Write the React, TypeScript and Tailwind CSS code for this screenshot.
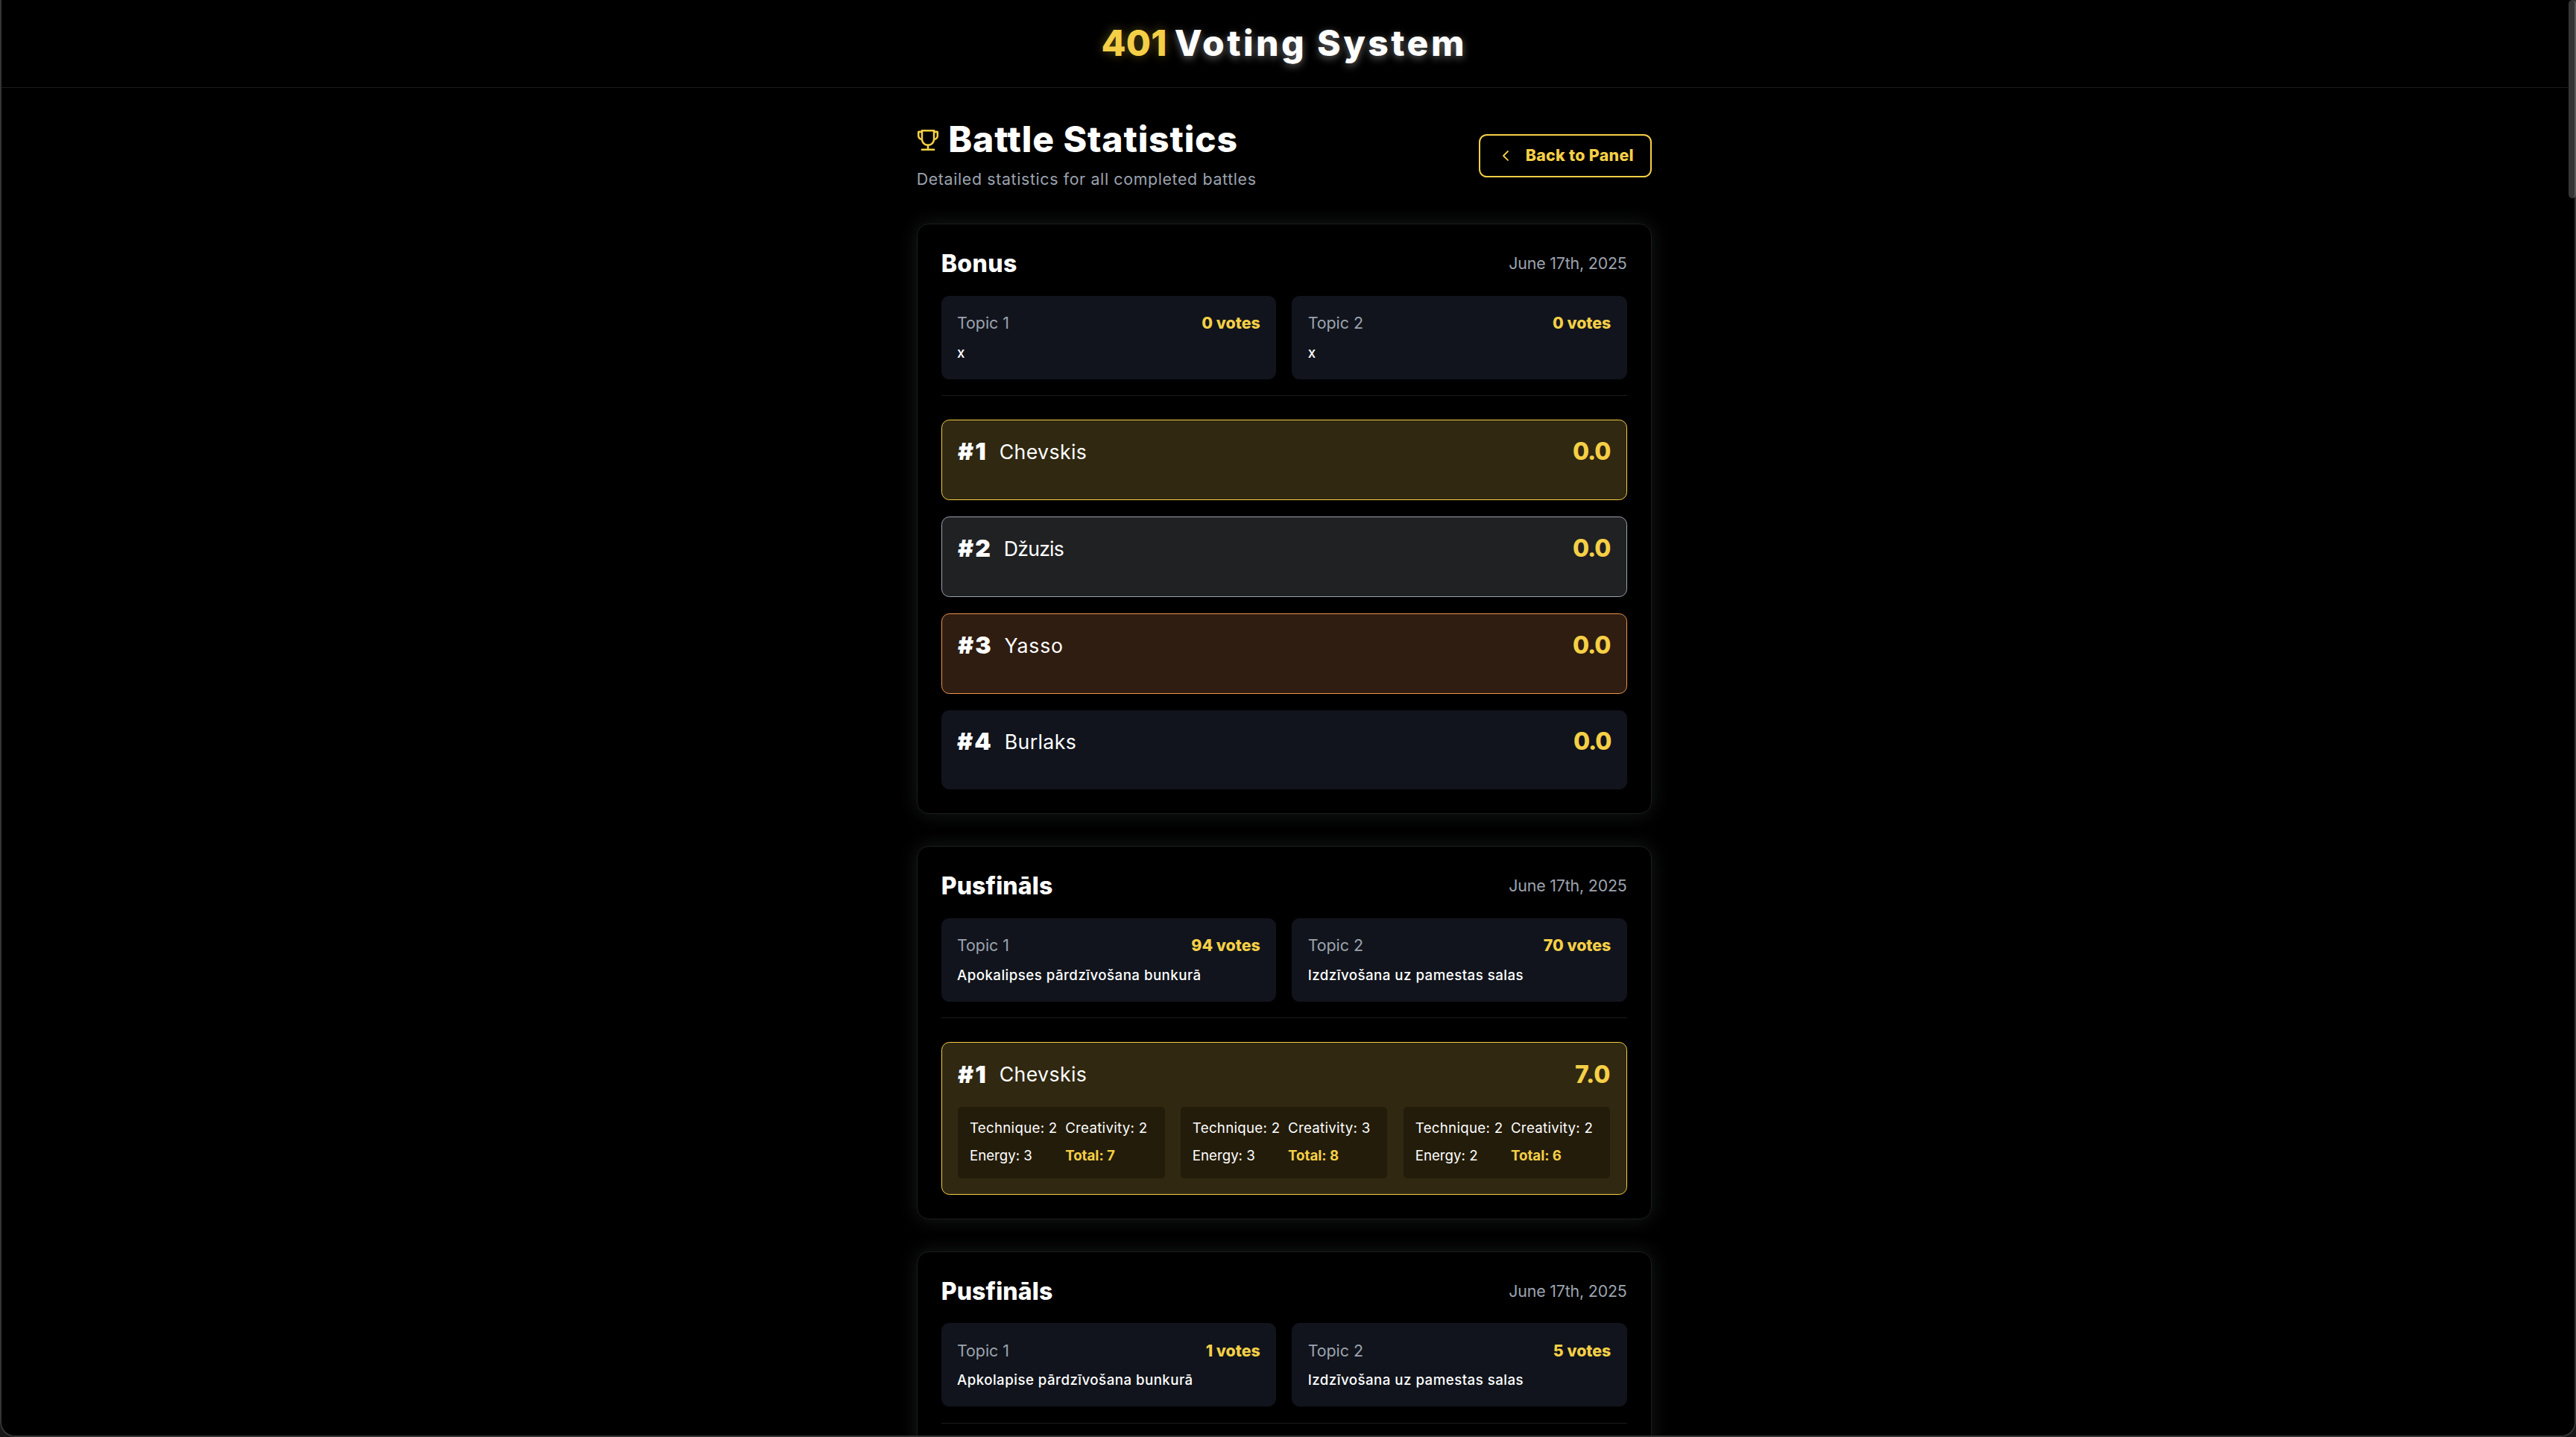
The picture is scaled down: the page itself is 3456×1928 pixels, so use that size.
import { AiOutlineTrophy } from "react-icons/ai";
import { ChevronLeft } from "lucide-react";
import clsx from "clsx";

interface Judge {
  technique: number;
  creativity: number;
  energy: number;
}

interface Result {
  name: string;
  nameClass: string;
  score: string;
  scoreClass: string;
  judges?: Judge[];
}

interface Topic {
  title: string;
  votes: number;
}

interface Battle {
  id: number;
  title: string;
  titleClass: string;
  date: string;
  topics: Topic[];
  results: Result[];
}

const BATTLES: Battle[] = [
  {
    id: 1,
    title: "Bonus",
    titleClass: "tracking-[0.3px]",
    date: "June 17th, 2025",
    topics: [
      { title: "x", votes: 0 },
      { title: "x", votes: 0 },
    ],
    results: [
      { name: "Chevskis", nameClass: "tracking-[0.3px]",  score: "0.0", scoreClass: "tracking-[-0.8px]" },
      { name: "Džuzis",   nameClass: "tracking-[-0.6px]", score: "0.0", scoreClass: "tracking-[-0.8px]" },
      { name: "Yasso",    nameClass: "tracking-[0.6px]",  score: "0.0", scoreClass: "tracking-[-0.8px]" },
      { name: "Burlaks",  nameClass: "tracking-[0.3px]",  score: "0.0", scoreClass: "tracking-[-0.8px]" },
    ],
  },
  {
    id: 2,
    title: "Pusfināls",
    titleClass: "tracking-[0.1px]",
    date: "June 17th, 2025",
    topics: [
      { title: "Apokalipses pārdzīvošana bunkurā", votes: 94 },
      { title: "Izdzīvošana uz pamestas salas",    votes: 70 },
    ],
    results: [
      {
        name: "Chevskis",
        nameClass: "tracking-[0.3px]",
        score: "7.0",
        scoreClass: "",
        judges: [
          { technique: 2, creativity: 2, energy: 3 },
          { technique: 2, creativity: 3, energy: 3 },
          { technique: 2, creativity: 2, energy: 2 },
        ],
      },
    ],
  },
  {
    id: 3,
    title: "Pusfināls",
    titleClass: "tracking-[0.1px]",
    date: "June 17th, 2025",
    topics: [
      { title: "Apkolapise pārdzīvošana bunkurā", votes: 1 },
      { title: "Izdzīvošana uz pamestas salas",   votes: 5 },
    ],
    results: [],
  },
];

const RANK_STYLES = [
  "bg-[#302811] border border-[#f5cf46]",
  "bg-[#202123] border border-[#9ca3af]",
  "bg-[#2f1d11] border border-[#ee9549]",
];

function JudgeScore({ judge }: { judge: Judge }) {
  const total = judge.technique + judge.creativity + judge.energy;
  return (
    <div className="grid grid-cols-[auto_1fr] gap-2 rounded bg-[#231c0a] p-3 text-sm whitespace-nowrap">
      <span className="tracking-[0.22px]">Technique: {judge.technique}</span>
      <span className="tracking-[0.22px]">Creativity: {judge.creativity}</span>
      <span>Energy: {judge.energy}</span>
      <span className="font-bold text-[#f5cf46]">Total: {total}</span>
    </div>
  );
}

function BattleCard({ battle }: { battle: Battle }) {
  return (
    <section className="rounded-xl border border-[#1b1d1e] bg-black p-6 shadow-[0_0_20px_rgba(200,230,220,0.11)]">
      <div className="mb-4 flex items-center justify-between">
        <h2 className={clsx("text-2xl font-extrabold", battle.titleClass)}>{battle.title}</h2>
        <span className="tracking-[-0.12px] text-[#9ca3af]">{battle.date}</span>
      </div>

      {/* Topics */}
      <div className="mb-4 grid grid-cols-2 gap-4">
        {battle.topics.map((topic, i) => (
          <div key={i} className="rounded-lg bg-[#11141c] p-4">
            <div className="mb-2 flex items-center justify-between">
              <span className="text-[#9ca3af]">Topic {i + 1}</span>
              <span className="font-extrabold text-[#f5cf46]">{topic.votes} votes</span>
            </div>
            <p className="text-sm font-medium tracking-[0.36px]">{topic.title}</p>
          </div>
        ))}
      </div>

      {/* Ranking */}
      <div className="space-y-4 border-t border-[#1b1b1c] pt-6">
        {battle.results.map((result, i) => (
          <div key={result.name} className={clsx("rounded-lg p-4", RANK_STYLES[i] ?? "bg-[#11141c]")}>
            <div className="mb-4 flex items-center justify-between">
              <div className="flex items-center gap-3">
                <span className="text-2xl font-black tracking-[1.5px]">#{i + 1}</span>
                <span className={clsx("text-xl", result.nameClass)}>{result.name}</span>
              </div>
              <span className={clsx("text-2xl font-extrabold text-[#f5cf46]", result.scoreClass)}>
                {result.score}
              </span>
            </div>
            {result.judges && (
              <div className="grid grid-cols-3 gap-4">
                {result.judges.map((judge, j) => (
                  <JudgeScore key={j} judge={judge} />
                ))}
              </div>
            )}
          </div>
        ))}
      </div>
    </section>
  );
}

export default function App() {
  return (
    <div className="relative h-[1928px] overflow-hidden bg-black font-['Inter',sans-serif] text-white">
      <div className="mr-[8px] [zoom:1.33333]">
        <header className="flex justify-center border-b border-[#1b1b1c] py-6">
          <h1 className="text-4xl font-extrabold tracking-[2.6px] [text-shadow:0_2px_8px_rgba(255,255,255,0.4)]">
            <span className="-mr-[3px] tracking-[0.2px] text-[#f5cf46] [text-shadow:0_0_10px_rgba(245,207,70,0.35)]">401</span>{" "}
            Voting System
          </h1>
        </header>

        <main className="mx-auto w-[739.5px] pt-8">
          <div className="mb-8 flex items-center justify-between">
            <div>
              <h2 className="-ml-0.5 flex items-center gap-[7px] text-4xl font-extrabold tracking-[0.65px]">
                <AiOutlineTrophy size={27} className="text-[#f5cf46]" />
                Battle Statistics
              </h2>
              <p className="mt-2 tracking-[0.49px] text-[#9ca3af]">Detailed statistics for all completed battles</p>
            </div>
            <button className="flex h-[43.5px] w-[173.5px] items-center justify-center gap-[11px] rounded-lg border-2 border-[#f5cf46] font-extrabold tracking-[0.25px] text-[#f5cf46]">
              <ChevronLeft size={18} strokeWidth={1.8} />
              Back to Panel
            </button>
          </div>

          <div className="space-y-8">
            {BATTLES.map((battle) => (
              <BattleCard key={battle.id} battle={battle} />
            ))}
          </div>
        </main>
      </div>

      {/* Window frame and scrollbar thumb */}
      <div className="pointer-events-none absolute inset-0 rounded-b-[20px] border-2 border-t-0 border-[#353535] shadow-[0_0_0_20px_#181818]" />
      <div className="absolute top-0 right-0 h-[266px] w-[10px] rounded-full border-r-2 border-[#5a5a5a] bg-[#353535]" />
    </div>
  );
}
